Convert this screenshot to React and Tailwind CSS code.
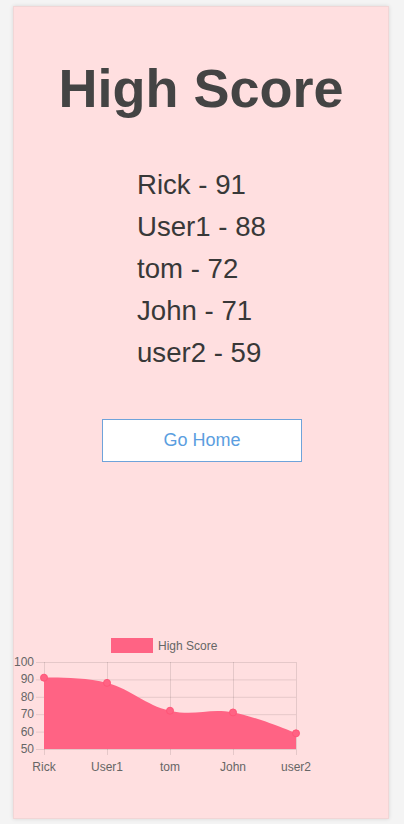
const scores = [
  { name: "Rick", score: 91 },
  { name: "User1", score: 88 },
  { name: "tom", score: 72 },
  { name: "John", score: 71 },
  { name: "user2", score: 59 },
];

const PINK = "#ff6384";
const GRID = "rgba(0,0,0,0.1)";

function ScoreChart() {
  const x0 = 30;
  const step = 63;
  const yTop = 32;
  const yBot = 119;
  const yOf = (v) => yTop + ((100 - v) * (yBot - yTop)) / 50;
  const pts = scores.map((s, i) => [x0 + i * step, yOf(s.score)]);

  // smooth curve, roughly like chart.js tension 0.4
  const k = 0.2;
  const tan = pts.map((p, i) => {
    if (i === 0 || i === pts.length - 1) return [0, 0];
    return [k * (pts[i + 1][0] - pts[i - 1][0]), k * (pts[i + 1][1] - pts[i - 1][1])];
  });
  let d = `M${pts[0][0]},${pts[0][1]}`;
  for (let i = 0; i < pts.length - 1; i++) {
    const a = pts[i];
    const b = pts[i + 1];
    const c1 = [a[0] + tan[i][0], a[1] + tan[i][1]];
    const c2 = [b[0] - tan[i + 1][0], b[1] - tan[i + 1][1]];
    d += ` C${c1[0]},${c1[1]} ${c2[0]},${c2[1]} ${b[0]},${b[1]}`;
  }
  const area = `${d} L${pts[pts.length - 1][0]},${yBot} L${x0},${yBot} Z`;
  const ticks = [100, 90, 80, 70, 60, 50];

  return (
    <svg width="310" height="150" className="block" style={{ fontFamily: "'Liberation Sans', Arial, sans-serif" }}>
      {/* legend */}
      <rect x="97" y="8" width="42" height="15" fill={PINK} />
      <text x="144" y="20" fontSize="12" fill="#666">High Score</text>

      {/* grid */}
      {ticks.map((t) => (
        <g key={t}>
          <line x1={x0 - 8} x2={x0 + step * 4} y1={yOf(t) + 0.5} y2={yOf(t) + 0.5} stroke={GRID} />
          <text x="20" y={yOf(t) + 4} fontSize="12" fill="#666" textAnchor="end">{t}</text>
        </g>
      ))}
      {scores.map((s, i) => (
        <g key={s.name}>
          <line x1={x0 + i * step + 0.5} x2={x0 + i * step + 0.5} y1={yTop} y2={yBot + 6} stroke={GRID} />
          <text x={x0 + i * step} y="141" fontSize="12" fill="#666" textAnchor="middle">{s.name}</text>
        </g>
      ))}

      <path d={area} fill={PINK} />
      {pts.map((p, i) => (
        <circle key={i} cx={p[0]} cy={p[1]} r="3.5" fill={PINK} stroke="#ff5577" />
      ))}
    </svg>
  );
}

export default function App() {
  return (
    <div className="min-h-[824px] bg-[#f4f4f4] pt-[6px] pl-[13px]" style={{ fontFamily: "'Liberation Sans', Arial, sans-serif" }}>
      <div className="w-[376px] h-[813px] bg-[#ffdfe0] border border-[#f1d6d6] shadow-[0_0_4px_rgba(0,0,0,0.12)] flex flex-col">
        <h1 className="mt-[54px] text-center text-[54px] leading-none font-bold text-[#444444]">High Score</h1>

        <ul className="mt-[49px] pl-[123px] text-[27.6px] leading-[42px] text-[#383838]">
          {scores.map((s) => (
            <li key={s.name}>
              {s.name} - {s.score}
            </li>
          ))}
        </ul>

        <button className="mt-[45px] ml-[88px] w-[200px] h-[43px] bg-white border border-[#6fa3da] text-[18px] text-[#5b9ee0]">
          Go Home
        </button>

        <div className="mt-[168px]">
          <ScoreChart />
        </div>
      </div>
    </div>
  );
}
